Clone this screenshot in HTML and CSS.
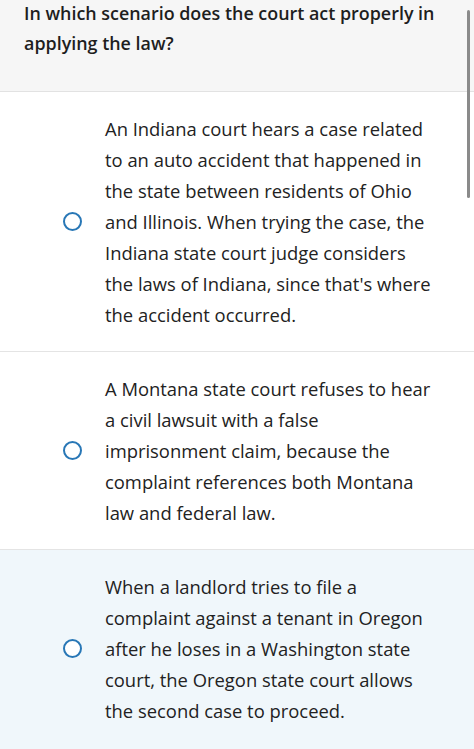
FILE: index.html
```html
<!DOCTYPE html>
<html lang="en">
<head>
    <meta charset="UTF-8">
    <meta name="viewport" content="width=device-width, initial-scale=1.0">
    <title>Question</title>
    <link rel="stylesheet" href="styles.css">
</head>
<body>
    <div id="app">
        <div class="question">
            <p>In which scenario does the court act properly in<br>applying the law?</p>
        </div>
        <ul class="choices">
            <li class="choice">
                <span class="radio"></span>
                <p>An Indiana court hears a case related<br>to an auto accident that happened in<br>the state between residents of Ohio<br>and Illinois. When trying the case, the<br>Indiana state court judge considers<br>the laws of Indiana, since that's where<br>the accident occurred.</p>
            </li>
            <li class="choice">
                <span class="radio"></span>
                <p>A Montana state court refuses to hear<br>a civil lawsuit with a false<br>imprisonment claim, because the<br>complaint references both Montana<br>law and federal law.</p>
            </li>
            <li class="choice hover">
                <span class="radio"></span>
                <p>When a landlord tries to file a<br>complaint against a tenant in Oregon<br>after he loses in a Washington state<br>court, the Oregon state court allows<br>the second case to proceed.</p>
            </li>
        </ul>
        <div class="scrollbar"></div>
    </div>
</body>
</html>
```
FILE: styles.css
```css
body {
    font-family: "Open Sans", sans-serif;
    margin: 0;
    padding: 0;
    background-color: #fff;
    color: #222;
}

#app {
    position: relative;
    height: 749px;
    overflow: hidden;
}

.question {
    background-color: #f6f6f6;
    border-bottom: 1px solid #e2e2e2;
    padding: 0 10px 33px 24px;
}

.question p {
    margin: -2px 0 0;
    font-size: 17.9px;
    font-weight: 600;
    line-height: 30px;
    color: #1e1e1e;
    white-space: nowrap;
}

.choices {
    list-style-type: none;
    margin: 0;
    padding: 0;
}

.choice {
    display: flex;
    align-items: center;
    gap: 23px;
    padding: 21px 10px 21px 63px;
    border-bottom: 1px solid #e4e4e4;
}

.choice:last-child {
    padding-bottom: 40px;
    border-bottom: none;
}

.choice.hover {
    background-color: #f0f7fb;
}

.choice p {
    margin: 0;
    font-size: 18.4px;
    line-height: 31px;
    white-space: nowrap;
}

.radio {
    flex: 0 0 auto;
    width: 15px;
    height: 15px;
    border: 2.5px solid #2877b6;
    border-radius: 50%;
    background-color: #fff;
}

.scrollbar {
    position: absolute;
    top: 10px;
    right: 4px;
    width: 3px;
    height: 188px;
    border-radius: 2px;
    background-color: #8a8a8a;
}
```
